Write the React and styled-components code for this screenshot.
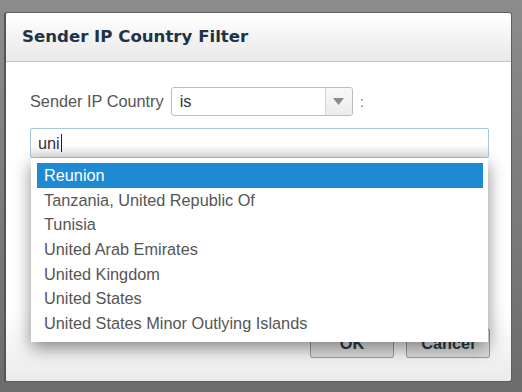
import React from "react";
import styled, { createGlobalStyle } from "styled-components";

const Global = createGlobalStyle`
  html, body { margin: 0; padding: 0; }
  body { background: #7c7c7c; font-family: "Liberation Sans", Arial, sans-serif; }
`;

const Page = styled.div`
  width: 522px;
  height: 392px;
  box-sizing: border-box;
  padding: 12px 10px 10px 4px;
  background: linear-gradient(#8c8c8c, #6c6c6c);
  display: flex;
  align-items: flex-start;
`;

const Dialog = styled.div`
  width: 508px;
  height: 370px;
  box-sizing: border-box;
  background: linear-gradient(#ffffff 80%, #ebebeb);
  border: 1px solid #5e5e5e;
  border-left: 2px solid #555;
  border-radius: 3px;
  display: flex;
  flex-direction: column;
`;

const Header = styled.div`
  height: 49px;
  flex: none;
  box-sizing: border-box;
  display: flex;
  align-items: center;
  padding: 0 0 2px 16px;
  background: linear-gradient(#ffffff, #e8e8e8);
  border-bottom: 1px solid #c4c4c4;
  border-radius: 3px 3px 0 0;
`;

const Title = styled.h1`
  margin: 0;
  font-family: "DejaVu Sans", sans-serif;
  font-weight: bold;
  font-size: 16.6px;
  color: #1e3348;
`;

const Body = styled.div`
  flex: 1;
  display: flex;
  flex-direction: column;
  padding: 25px 21px 0 24px;
`;

const Row = styled.div`
  display: flex;
  align-items: center;
  height: 29px;
  gap: 5px;
`;

const Label = styled.span`
  font-size: 16.3px;
  color: #555;
  margin-right: 2px;
`;

const Select = styled.div`
  width: 182px;
  height: 29px;
  box-sizing: border-box;
  border: 1px solid #bcbcbc;
  border-radius: 3px;
  display: flex;
  background: #fff;
`;

const SelectValue = styled.span`
  flex: 1;
  padding-left: 8px;
  font-size: 16.3px;
  line-height: 27px;
  color: #333;
`;

const Arrow = styled.span`
  width: 26px;
  display: flex;
  align-items: center;
  justify-content: center;
  border-left: 1px solid #d2d2d2;
  background: linear-gradient(#f8f8f8, #ececec);
  border-radius: 0 2px 2px 0;
`;

const Colon = styled.span`
  font-size: 15px;
  color: #777;
  margin-left: 2px;
`;

const Field = styled.div`
  position: relative;
  margin-top: 12px;
  width: 459px;
`;

const Input = styled.div`
  height: 30px;
  box-sizing: border-box;
  border: 1px solid #a4c6df;
  border-radius: 2px;
  background: linear-gradient(#ffffff 55%, #e4e4e6);
  padding-left: 7px;
  display: flex;
  align-items: center;
  font-size: 16.3px;
  color: #333;
`;

const Caret = styled.span`
  display: inline-block;
  width: 1px;
  height: 18px;
  background: #222;
  margin-left: 1px;
`;

const List = styled.ul`
  position: absolute;
  top: 100%;
  left: 1px;
  width: 457px;
  box-sizing: border-box;
  margin: 0;
  padding: 5px 5px 6px 6px;
  list-style: none;
  background: #fff;
  box-shadow: 0 6px 16px rgba(0, 0, 0, 0.45);
  z-index: 2;
`;

const Item = styled.li`
  height: 24.67px;
  line-height: 24px;
  padding-left: 7px;
  font-size: 16.3px;
  color: ${(p) => (p.$active ? "#fff" : "#555")};
  background: ${(p) => (p.$active ? "#1f8ad4" : "transparent")};
  white-space: nowrap;
`;

const Footer = styled.div`
  display: flex;
  justify-content: flex-end;
  gap: 12px;
  padding: 0 21px 23px 0;
`;

const Button = styled.button`
  width: 84px;
  height: 29px;
  padding: 0;
  border: 1px solid #9a9a9a;
  border-radius: 2px;
  background: linear-gradient(#f4f4f4, #d9d9d9);
  font-family: "Liberation Sans", Arial, sans-serif;
  font-weight: bold;
  font-size: 16.3px;
  color: #2a3a4a;
`;

const options = [
  "Reunion",
  "Tanzania, United Republic Of",
  "Tunisia",
  "United Arab Emirates",
  "United Kingdom",
  "United States",
  "United States Minor Outlying Islands",
];

export default function App() {
  return (
    <>
      <Global />
      <Page>
        <Dialog>
          <Header>
            <Title>Sender IP Country Filter</Title>
          </Header>
          <Body>
            <Row>
              <Label>Sender IP Country</Label>
              <Select>
                <SelectValue>is</SelectValue>
                <Arrow>
                  <svg width="11" height="7" viewBox="0 0 11 7">
                    <path d="M0 0 H11 L5.5 7 Z" fill="#8a8a8a" />
                  </svg>
                </Arrow>
              </Select>
              <Colon>:</Colon>
            </Row>
            <Field>
              <Input>
                uni
                <Caret />
              </Input>
              <List>
                {options.map((o, i) => (
                  <Item key={o} $active={i === 0}>
                    {o}
                  </Item>
                ))}
              </List>
            </Field>
          </Body>
          <Footer>
            <Button>OK</Button>
            <Button>Cancel</Button>
          </Footer>
        </Dialog>
      </Page>
    </>
  );
}
